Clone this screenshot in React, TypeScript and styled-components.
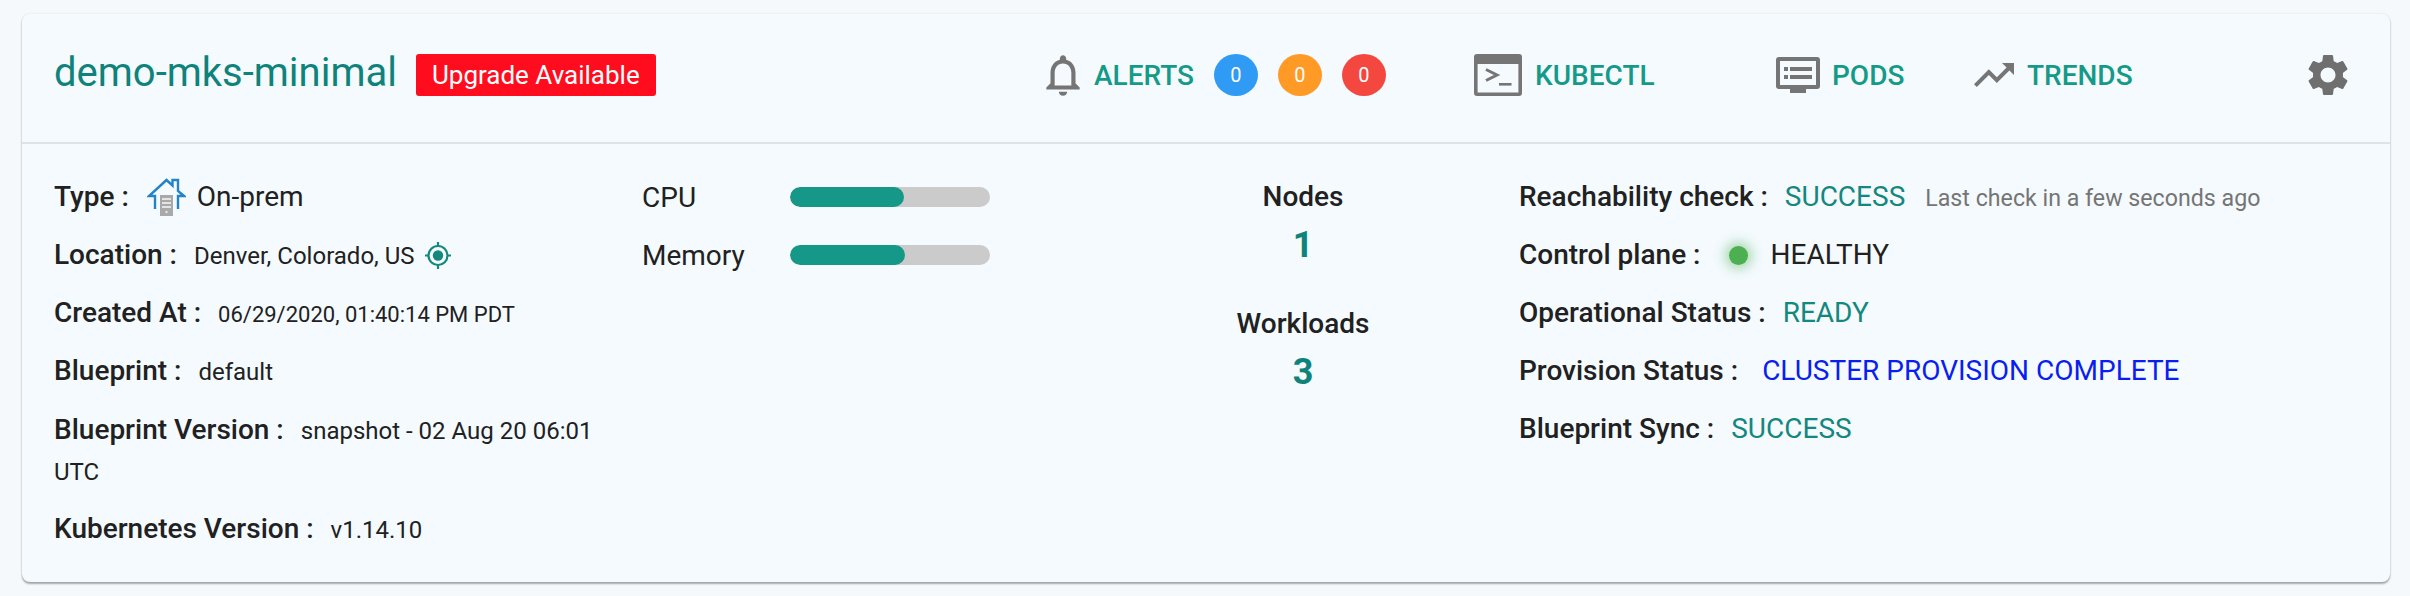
import React from "react";
import styled, { createGlobalStyle } from "styled-components";
import { MdNotificationsNone, MdSettings, MdTrendingUp } from "react-icons/md";

const GlobalStyle = createGlobalStyle`
  html, body {
    margin: 0;
    background: #f6f9fb;
    font-family: Roboto, "Liberation Sans", sans-serif;
    color: #212121;
  }
`;

function TerminalIcon() {
  return (
    <svg width="48" height="42" viewBox="0 0 48 42">
      <path
        fillRule="evenodd"
        fill="#757575"
        d="M3 0h42a3 3 0 0 1 3 3v36a3 3 0 0 1-3 3H3a3 3 0 0 1-3-3V3a3 3 0 0 1 3-3zM3.6 10v28.4h40.8V10z"
      />
      <path d="M12 15.5l11 5.5-11 5.5" fill="none" stroke="#757575" strokeWidth="3" />
      <rect x="25" y="29" width="12.5" height="2.6" fill="#757575" />
    </svg>
  );
}

function PodsIcon() {
  return (
    <svg width="44" height="36" viewBox="0 0 44 36">
      <path
        fillRule="evenodd"
        fill="#757575"
        d="M3 0h38a3 3 0 0 1 3 3v26a3 3 0 0 1-3 3H3a3 3 0 0 1-3-3V3a3 3 0 0 1 3-3zM4 4v24h36V4z"
      />
      <rect x="14" y="31" width="16" height="5" fill="#757575" />
      <rect x="8" y="10" width="4" height="4" fill="#757575" />
      <rect x="14" y="10" width="22" height="4" fill="#757575" />
      <rect x="8" y="18" width="4" height="4" fill="#757575" />
      <rect x="14" y="18" width="22" height="4" fill="#757575" />
    </svg>
  );
}

function HomeIcon() {
  return (
    <HomeSvg width="39" height="38" viewBox="0 0 39 38">
      <path
        d="M8 31V18H2L19.5 2l6 5.5V2H31v11l6 5h-6v13"
        fill="none"
        stroke="#2383c9"
        strokeWidth="2.4"
      />
      <rect x="13" y="17" width="13" height="21" fill="#a9a9a9" />
      <rect x="15" y="20" width="9" height="2" fill="#e4e4e4" />
      <rect x="15" y="24" width="9" height="2" fill="#e4e4e4" />
      <rect x="15" y="28" width="9" height="2" fill="#e4e4e4" />
      <circle cx="19.5" cy="34" r="1.2" fill="#e4e4e4" />
    </HomeSvg>
  );
}

function TargetIcon() {
  return (
    <TargetSvg width="26" height="27" viewBox="0 0 26 27">
      <circle cx="13" cy="13.5" r="9.5" fill="none" stroke="#14877f" strokeWidth="2.2" />
      <circle cx="13" cy="13.5" r="5.2" fill="#14877f" />
      <path d="M13 0v4M13 23v4M0 13.5h4M22 13.5h4" stroke="#14877f" strokeWidth="2.2" />
    </TargetSvg>
  );
}

const bars = [
  { label: "CPU", pct: 57 },
  { label: "Memory", pct: 57.5 },
];

function App() {
  return (
    <>
      <GlobalStyle />
      <Page>
        <Card>
          <Header>
            <TitleGroup>
              <Title>demo-mks-minimal</Title>
              <UpgradeBadge>Upgrade Available</UpgradeBadge>
            </TitleGroup>
            <NavItem $width={436} $gap={6}>
              <MdNotificationsNone size={50} color="#757575" />
              <NavLabel>ALERTS</NavLabel>
              <Counts>
                <Count $color="#2f9bf5">0</Count>
                <Count $color="#ff9a26">0</Count>
                <Count $color="#f44740">0</Count>
              </Counts>
            </NavItem>
            <NavItem $width={302} $gap={13}>
              <TerminalIcon />
              <NavLabel>KUBECTL</NavLabel>
            </NavItem>
            <NavItem $width={194} $gap={12}>
              <PodsIcon />
              <NavLabel>PODS</NavLabel>
            </NavItem>
            <NavItem $width={333} $gap={9}>
              <MdTrendingUp size={48} color="#757575" />
              <NavLabel>TRENDS</NavLabel>
            </NavItem>
            <MdSettings size={50} color="#6f6f6f" />
          </Header>
          <Body>
            <InfoColumn>
              <Row>
                <Label>Type :</Label>
                <HomeIcon />
                <LargeValue>On-prem</LargeValue>
              </Row>
              <Row>
                <Label>Location :</Label>
                <Value>Denver, Colorado, US</Value>
                <TargetIcon />
              </Row>
              <Row>
                <Label>Created At :</Label>
                <DateValue>06/29/2020, 01:40:14 PM PDT</DateValue>
              </Row>
              <Row>
                <Label>Blueprint :</Label>
                <Value>default</Value>
              </Row>
              <WrapBlock>
                <WrapLine>
                  <Label>Blueprint Version :</Label>
                  <Value>snapshot - 02 Aug 20 06:01</Value>
                </WrapLine>
                <WrapLine>
                  <Value>UTC</Value>
                </WrapLine>
              </WrapBlock>
              <Row>
                <Label>Kubernetes Version :</Label>
                <Value>v1.14.10</Value>
              </Row>
            </InfoColumn>
            <UsageColumn>
              {bars.map((bar) => (
                <UsageRow key={bar.label}>
                  <UsageLabel>{bar.label}</UsageLabel>
                  <Track>
                    <Fill style={{ width: `${bar.pct}%` }} />
                  </Track>
                </UsageRow>
              ))}
            </UsageColumn>
            <StatsColumn>
              <Stat>
                <StatLabel>Nodes</StatLabel>
                <StatValue>1</StatValue>
              </Stat>
              <Stat>
                <StatLabel>Workloads</StatLabel>
                <StatValue>3</StatValue>
              </Stat>
            </StatsColumn>
            <StatusColumn>
              <Row>
                <Label>Reachability check :</Label>
                <LargeValue $color="#14877f">SUCCESS</LargeValue>
                <Muted>Last check in a few seconds ago</Muted>
              </Row>
              <Row>
                <Label>Control plane :</Label>
                <HealthDot />
                <LargeValue>HEALTHY</LargeValue>
              </Row>
              <Row>
                <Label>Operational Status :</Label>
                <LargeValue $color="#14877f">READY</LargeValue>
              </Row>
              <Row>
                <Label>Provision Status :</Label>
                <ProvisionValue>CLUSTER PROVISION COMPLETE</ProvisionValue>
              </Row>
              <Row>
                <Label>Blueprint Sync :</Label>
                <LargeValue $color="#14877f">SUCCESS</LargeValue>
              </Row>
            </StatusColumn>
          </Body>
        </Card>
      </Page>
    </>
  );
}
export default App;

const Page = styled.div`
  padding: 14px 20px 14px 22px;
`;

const Card = styled.div`
  height: 568px;
  box-sizing: border-box;
  background: #f4fafe;
  border-radius: 8px;
  box-shadow: 0 2px 2px rgba(0, 0, 0, 0.32), 0 0 2px rgba(0, 0, 0, 0.12);
`;

const Header = styled.div`
  display: flex;
  align-items: center;
  height: 130px;
  padding: 0 0 6px 32px;
  box-sizing: border-box;
  border-bottom: 2px solid #dde3e7;
`;

const TitleGroup = styled.div`
  display: flex;
  align-items: center;
  gap: 19px;
  width: 984px;
`;

const Title = styled.div`
  font-size: 40px;
  color: #0f837b;
  margin-top: -6px;
`;

const UpgradeBadge = styled.div`
  background: #ff0d1e;
  color: #fff;
  font-size: 26px;
  line-height: 42px;
  padding: 0 16px;
  border-radius: 3px;
`;

const NavItem = styled.div<{ $width: number; $gap: number }>`
  display: flex;
  align-items: center;
  gap: ${(p) => p.$gap}px;
  width: ${(p) => p.$width}px;
`;

const NavLabel = styled.span`
  font-size: 28px;
  font-weight: 500;
  color: #159a89;
`;

const Counts = styled.div`
  display: flex;
  gap: 20px;
  margin-left: 14px;
`;

const Count = styled.span<{ $color: string }>`
  width: 44px;
  height: 42px;
  border-radius: 50%;
  background: ${(p) => p.$color};
  color: #fff;
  font-size: 20px;
  line-height: 42px;
  text-align: center;
`;

const Body = styled.div`
  display: flex;
  padding: 24px 0 0 32px;
`;

const InfoColumn = styled.div`
  width: 588px;
`;

const Row = styled.div`
  display: flex;
  align-items: baseline;
  gap: 17px;
  height: 58px;
  line-height: 58px;
  white-space: nowrap;
`;

const WrapBlock = styled.div`
  padding: 8px 0 6px;
`;

const WrapLine = styled.div`
  display: flex;
  align-items: baseline;
  gap: 17px;
  height: 43px;
  line-height: 43px;
  white-space: nowrap;
`;

const HomeSvg = styled.svg`
  align-self: center;
  margin: 0 -6px 0 1px;
`;

const TargetSvg = styled.svg`
  align-self: center;
  margin-left: -7px;
`;

const Label = styled.span`
  font-size: 28px;
  font-weight: 500;
  white-space: nowrap;
`;

const Value = styled.span`
  font-size: 24px;
`;

const DateValue = styled.span`
  font-size: 22px;
`;

const LargeValue = styled.span<{ $color?: string }>`
  font-size: 28px;
  color: ${(p) => p.$color || "#212121"};
`;

const ProvisionValue = styled.span`
  font-size: 28px;
  color: #0a1ef0;
  margin-left: 7px;
`;

const Muted = styled.span`
  font-size: 23.2px;
  color: #757575;
  margin-left: 3px;
`;

const UsageColumn = styled.div`
  width: 445px;
`;

const UsageRow = styled.div`
  display: flex;
  align-items: center;
  height: 58px;
`;

const UsageLabel = styled.span`
  font-size: 28px;
  width: 148px;
`;

const Track = styled.div`
  width: 200px;
  height: 20px;
  border-radius: 10px;
  background: #cbcbcb;
  overflow: hidden;
`;

const Fill = styled.div`
  height: 100%;
  border-radius: 10px;
  background: #169888;
`;

const StatsColumn = styled.div`
  width: 432px;
  display: flex;
  flex-direction: column;
  gap: 31px;
  align-items: center;
`;

const Stat = styled.div`
  text-align: center;
`;

const StatLabel = styled.div`
  font-size: 28px;
  font-weight: 500;
  line-height: 58px;
`;

const StatValue = styled.div`
  font-size: 36px;
  font-weight: 700;
  line-height: 38px;
  color: #0f837b;
`;

const StatusColumn = styled.div`
  flex: 1;
`;

const HealthDot = styled.span`
  align-self: center;
  width: 19px;
  height: 19px;
  margin: 0 6px 0 11px;
  border-radius: 50%;
  background: #4caf50;
  box-shadow: 0 0 12px 4px rgba(76, 175, 80, 0.45);
`;
